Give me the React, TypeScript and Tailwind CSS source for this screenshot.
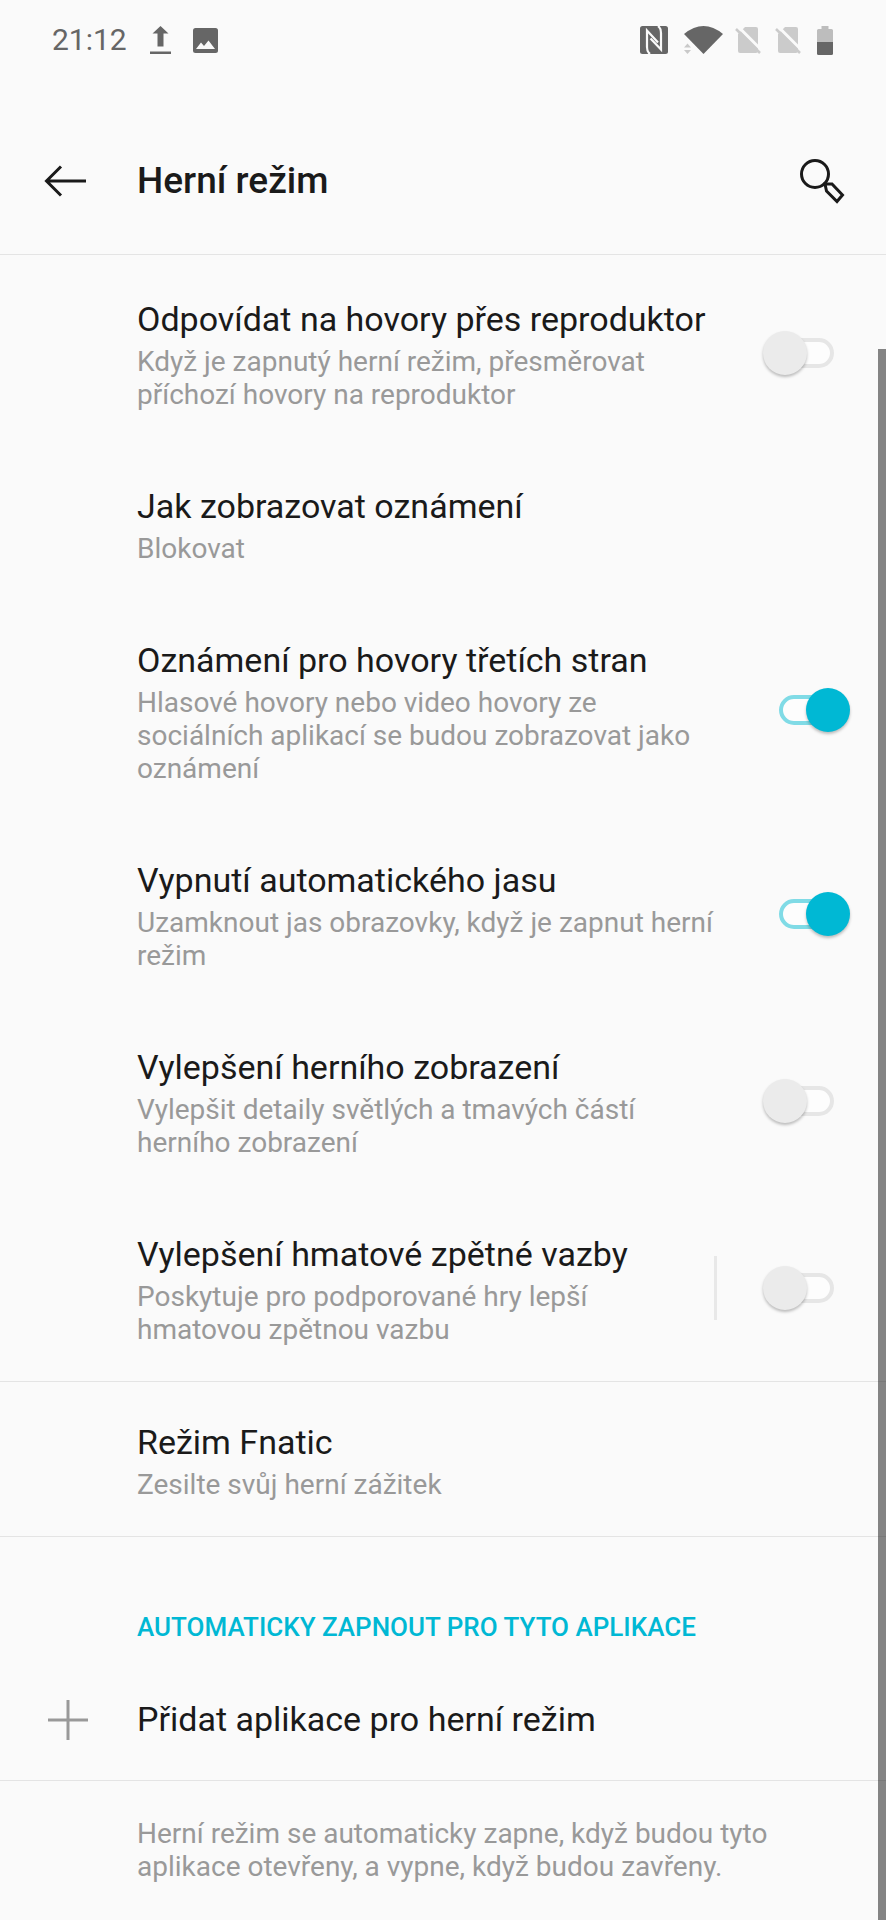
import { useState } from "react";

type Setting = {
  title: string;
  description: string;
  on?: boolean;
  split?: boolean;
};

const settings: Setting[] = [
  {
    title: "Odpovídat na hovory přes reproduktor",
    description: "Když je zapnutý herní režim, přesměrovat příchozí hovory na reproduktor",
    on: false,
  },
  { title: "Jak zobrazovat oznámení", description: "Blokovat" },
  {
    title: "Oznámení pro hovory třetích stran",
    description: "Hlasové hovory nebo video hovory ze sociálních aplikací se budou zobrazovat jako oznámení",
    on: true,
  },
  {
    title: "Vypnutí automatického jasu",
    description: "Uzamknout jas obrazovky, když je zapnut herní režim",
    on: true,
  },
  {
    title: "Vylepšení herního zobrazení",
    description: "Vylepšit detaily světlých a tmavých částí herního zobrazení",
    on: false,
  },
  {
    title: "Vylepšení hmatové zpětné vazby",
    description: "Poskytuje pro podporované hry lepší hmatovou zpětnou vazbu",
    on: false,
    split: true,
  },
];

function StatusBar() {
  return (
    <div className="flex h-20 items-center justify-between pl-13 pr-[53px] text-[#666]">
      <div className="flex items-center">
        <span className="text-[30px] leading-9">21:12</span>
        <svg className="ml-[23px] h-7 w-[21px]" viewBox="0 0 21 28" fill="currentColor">
          <path d="M10.5 0 18.5 7.5H13.5V20.5H7.5V7.5H2.5ZM0 25.5H21V28H0Z" />
        </svg>
        <svg className="ml-[22px] h-[25px] w-[25px]" viewBox="0 0 25 25">
          <rect width="25" height="25" rx="2.5" fill="currentColor" />
          <path d="M3 21 8 14.5 11 18 15.5 12.5 22 21Z" fill="#fafafa" />
        </svg>
      </div>
      <div className="flex items-center">
        <svg className="h-7 w-7" viewBox="0 0 28 28">
          <rect width="28" height="28" rx="2.5" fill="currentColor" />
          <g fill="none" stroke="#fafafa" strokeWidth="2.2">
            <path d="M10 28Q7 26 7 21V4.500L18 16.500" />
            <path d="M18 0Q21 2 21 7V23.500L10.500 12.500" />
          </g>
        </svg>
        <svg className="ml-4 h-7 w-[39px]" viewBox="0 0 39 28">
          <path d="M0 8Q19.5-8 39 8L19.5 28Z" fill="currentColor" />
          <path d="M0 21.5 3.5 17.5 7 21.5ZM0 24H7L3.5 28Z" fill="#c9c9c9" />
        </svg>
        <NoSim className="ml-3" />
        <NoSim className="ml-3.5" />
        <svg className="ml-4 h-[29px] w-4" viewBox="0 0 16 29">
          <path d="M4.5 0H11.5V3H14.5Q16 3 16 4.5V16H0V4.5Q0 3 1.5 3H4.5Z" fill="#bdbdbd" />
          <path d="M0 16H16V27.5Q16 29 14.5 29H1.5Q0 29 0 27.5Z" fill="currentColor" />
        </svg>
      </div>
    </div>
  );
}

function NoSim({ className }: { className: string }) {
  return (
    <svg className={`h-7 w-[26px] ${className}`} viewBox="0 0 26 28">
      <path d="M10 1H21Q23 1 23 3V25Q23 27 21 27H5Q3 27 3 25V8Z" fill="#cbcbcb" />
      <path d="M2.5 0 26 23.5" stroke="#fafafa" strokeWidth="3" />
      <path d="M1 3 25 27" stroke="#cbcbcb" strokeWidth="2.5" />
    </svg>
  );
}

function Switch({ label, initial }: { label: string; initial: boolean }) {
  const [on, setOn] = useState(initial);

  return (
    <label className="relative flex h-11 w-[87px] shrink-0 cursor-pointer items-center justify-center">
      <input
        type="checkbox"
        role="switch"
        aria-label={label}
        checked={on}
        onChange={() => setOn(!on)}
        className="peer sr-only"
      />
      <span className="h-[30px] w-[55px] rounded-full border-4 border-[#e6e6e6] bg-[#fdfdfd] peer-checked:border-[#80dbe6]" />
      <span className="absolute left-0 size-11 rounded-full bg-[#ebebeb] shadow-[0_2px_3px_rgba(0,0,0,0.25)] peer-checked:left-auto peer-checked:right-0 peer-checked:bg-[#00b8d4]" />
    </label>
  );
}

function SettingRow({ title, description, on, split }: Setting) {
  return (
    <li className="flex items-center pl-[137px] pr-9">
      <button type="button" className="flex-1 pt-10 pb-[35px] text-left">
        <span className="block text-[34px] leading-[41px] text-[#1a1a1a]">{title}</span>
        <span className="mt-[5px] block text-[28px] leading-[33px] text-[#999]">{description}</span>
      </button>
      {split && <span className="ml-4 h-16 w-[3px] bg-[#e8e8e8]" />}
      {on !== undefined && (
        <div className={split ? "ml-[46px]" : "ml-9"}>
          <Switch label={title} initial={on} />
        </div>
      )}
    </li>
  );
}

export default function App() {
  return (
    <main className="relative min-h-screen bg-[#fafafa] font-[Roboto,sans-serif]">
      <StatusBar />

      {/* Title bar */}
      <header className="flex h-[175px] items-center border-b border-[#e4e4e4] pt-8 pb-1 pl-11 pr-[41px]">
        <button type="button" aria-label="Zpět" className="text-[#1a1a1a]">
          <svg className="h-8 w-[42px]" viewBox="0 0 42 32" fill="none" stroke="currentColor" strokeWidth="3">
            <path d="M17 1.5 2.5 16 17 30.5M2.5 16H42" />
          </svg>
        </button>
        <h1 className="ml-[51px] flex-1 text-[37px] leading-10 font-medium text-[#1a1a1a]">Herní režim</h1>
        <button type="button" aria-label="Hledat" className="text-[#1a1a1a]">
          <svg className="size-[46px]" viewBox="0 0 46 46" fill="none" stroke="currentColor" strokeWidth="3">
            <circle cx="16" cy="16" r="13.5" />
            <path d="M26 26H33L43.5 37 38 43.5 27.5 33Z" />
          </svg>
        </button>
      </header>

      {/* Game mode settings */}
      <ul className="pt-1">
        {settings.map((setting) => (
          <SettingRow key={setting.title} {...setting} />
        ))}
      </ul>
      <ul className="border-y border-[#e4e4e4]">
        <SettingRow title="Režim Fnatic" description="Zesilte svůj herní zážitek" />
      </ul>

      {/* Apps */}
      <section className="border-b border-[#e4e4e4]">
        <h2 className="pt-[74px] pl-[137px] text-[26px] leading-8 font-medium text-[#00b8d4]">
          AUTOMATICKY ZAPNOUT PRO TYTO APLIKACE
        </h2>
        <button type="button" className="flex w-full items-center pt-14 pb-10 pl-12 text-left">
          <svg className="size-10 text-[#999]" viewBox="0 0 40 40" stroke="currentColor" strokeWidth="3">
            <path d="M20 0V40M0 20H40" />
          </svg>
          <span className="ml-[49px] text-[34px] leading-[41px] text-[#1a1a1a]">Přidat aplikace pro herní režim</span>
        </button>
      </section>

      <p className="pt-9 pr-10 pb-8 pl-[137px] text-[28px] leading-[33px] text-[#999]">
        Herní režim se automaticky zapne, když budou tyto aplikace otevřeny, a vypne, když budou zavřeny.
      </p>

      {/* Scroll indicator */}
      <div className="absolute top-[349px] right-0 bottom-0 w-2 bg-black/47" />
    </main>
  );
}
